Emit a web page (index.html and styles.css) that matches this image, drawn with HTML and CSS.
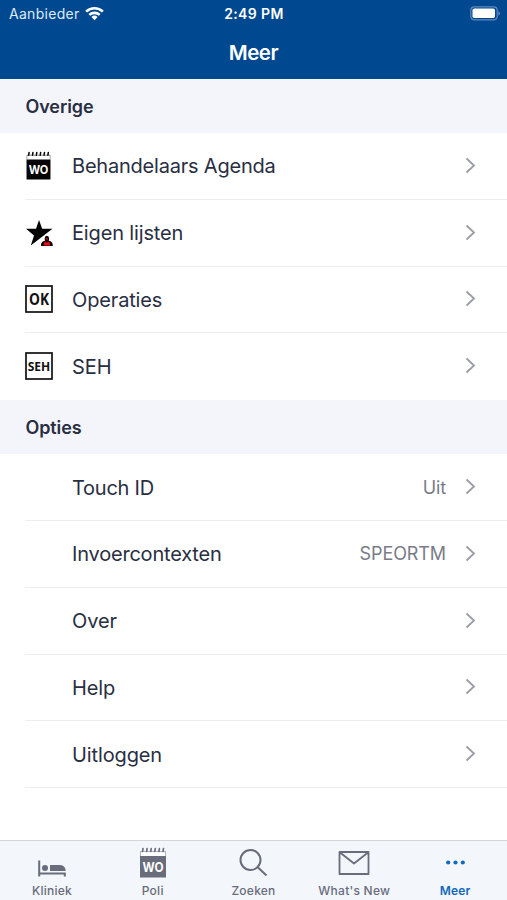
FILE: index.html
```html
<!DOCTYPE html>
<html lang="nl">
<head>
<meta charset="utf-8">
<title>Meer</title>
<link rel="stylesheet" href="styles.css">
</head>
<body>
<svg class="defs" aria-hidden="true">
  <symbol id="chevron" viewBox="0 0 12 18"><path d="M1.500 1.500l7.500 7L1.500 15.500" fill="none" stroke="currentColor" stroke-width="1.800"/></symbol>
  <symbol id="agenda" viewBox="0 0 26 32">
    <path d="M.5 9V4.500h25V9" fill="#fff" stroke="currentColor" stroke-width=".5"/>
    <path d="M0 9h26v21.500H0z" fill="currentColor"/>
    <path d="M3 1.500l-.5 3M7.100 1.500l-.5 3M11.200 1.500l-.5 3M15.300 1.500l-.5 3M19.400 1.500l-.5 3M23.500 1.500l-.5 3" stroke="currentColor" stroke-width="1.600" stroke-linecap="round"/>
    <text x="13" y="24.500" text-anchor="middle" textLength="21" lengthAdjust="spacingAndGlyphs" class="agenda-text">WO</text>
  </symbol>
</svg>
<div class="screen">
  <header class="top">
    <div class="status">
      <div class="carrier"><span>Aanbieder</span>
        <svg class="wifi" viewBox="0 0 20 15"><g fill="none" stroke="#fff" stroke-width="2.700"><path d="M1.200 5.500a12.600 12.600 0 0 1 17.600 0"/><path d="M4.500 9a8 8 0 0 1 11 0"/></g><path d="M6.800 11.200a4.700 4.700 0 0 1 6.400 0L10 14.500z" fill="#fff"/></svg>
      </div>
      <div class="time">2:49 PM</div>
      <svg class="battery" viewBox="0 0 31 15"><rect x=".8" y=".8" width="26.400" height="13" rx="3.500" fill="none" stroke="#6289ba" stroke-width="1.200"/><rect x="2.500" y="2.500" width="22.500" height="9.600" rx="1.800" fill="#fff"/><path d="M28.500 5q2.600 2.400 0 4.800z" fill="#7599c5"/></svg>
    </div>
    <h1>Meer</h1>
  </header>
  <main>
    <h2>Overige</h2>
    <ul>
      <li><div class="icon"><svg class="agenda" viewBox="0 0 26 32"><use href="#agenda"/></svg></div><span class="label l1">Behandelaars Agenda</span><svg class="chev"><use href="#chevron"/></svg></li>
      <li><div class="icon"><svg class="star" viewBox="0 0 28 28"><path d="M14 1l3.200 8.800H27.500L5.800 26.500l3.200-10L1 9.800h10z" fill="#050505"/><path d="M16 27q-.4-4.400 4-5.200-1.200-4.800 1.800-5 3.200.2 2 5 4.300.8 4 5.200z" fill="#160505"/><path d="M18.700 26.500l.5-3 1.700-1 1 1.500 1-1.500 1.700 1 .5 3z" fill="#e40c19"/><circle cx="21.800" cy="20" r="1.100" fill="#8d2024"/></svg></div><span class="label l2">Eigen lijsten</span><svg class="chev"><use href="#chevron"/></svg></li>
      <li><div class="icon"><svg class="box" viewBox="0 0 28 28"><rect x="1" y="1" width="26" height="26" fill="#fff" stroke="#111" stroke-width="1.700"/><text x="14" y="19.500" text-anchor="middle" textLength="20" lengthAdjust="spacingAndGlyphs" class="ok">OK</text></svg></div><span class="label l3">Operaties</span><svg class="chev"><use href="#chevron"/></svg></li>
      <li class="last"><div class="icon"><svg class="box" viewBox="0 0 28 28"><rect x="1" y="1" width="26" height="26" fill="#fff" stroke="#111" stroke-width="1.700"/><text x="14" y="18.500" text-anchor="middle" textLength="22.500" lengthAdjust="spacingAndGlyphs" class="seh">SEH</text></svg></div><span class="label l4">SEH</span><svg class="chev"><use href="#chevron"/></svg></li>
    </ul>
    <h2>Opties</h2>
    <ul>
      <li><div class="icon"></div><span class="label l5">Touch ID</span><span class="value">Uit</span><svg class="chev"><use href="#chevron"/></svg></li>
      <li><div class="icon"></div><span class="label l6">Invoercontexten</span><span class="value">SPEORTM</span><svg class="chev"><use href="#chevron"/></svg></li>
      <li><div class="icon"></div><span class="label l7">Over</span><svg class="chev"><use href="#chevron"/></svg></li>
      <li><div class="icon"></div><span class="label l7">Help</span><svg class="chev"><use href="#chevron"/></svg></li>
      <li><div class="icon"></div><span class="label l7">Uitloggen</span><svg class="chev"><use href="#chevron"/></svg></li>
    </ul>
  </main>
  <nav>
    <a><svg width="28" height="32" viewBox="0 0 28 32"><path d="M1.200 13.500v16M1 26.500h26M26.800 25.500v4" fill="none" stroke="currentColor" stroke-width="2"/><circle cx="7" cy="21" r="3" fill="currentColor"/><path d="M12 18h10q5.500.500 5.700 6H12z" fill="currentColor"/></svg><span>Kliniek</span></a>
    <a><svg width="26" height="32" viewBox="0 0 26 32"><use href="#agenda"/></svg><span>Poli</span></a>
    <a><svg width="30" height="32" viewBox="0 0 30 32"><g fill="none" stroke="currentColor" stroke-width="2"><circle cx="12.500" cy="13" r="10"/><path d="M19.500 20l9 8.500"/></g></svg><span>Zoeken</span></a>
    <a><svg width="32" height="32" viewBox="0 0 32 32"><path d="M1.500 5h29v22h-29zM2 5.500l14 11L30 5.500" fill="none" stroke="currentColor" stroke-width="1.800" stroke-linejoin="round"/></svg><span>What's New</span></a>
    <a class="active"><svg width="20" height="32" viewBox="0 0 20 32"><g fill="currentColor"><circle cx="3.200" cy="15.500" r="2.100"/><circle cx="10.500" cy="15.500" r="2.100"/><circle cx="17.800" cy="15.500" r="2.100"/></g></svg><span>Meer</span></a>
  </nav>
</div>
</body>
</html>
```
FILE: styles.css
```css
* { box-sizing: border-box; }
body { margin: 0; background: #fff; font-family: Inter, "Liberation Sans", sans-serif; color: #292e42; }
.defs { display: none; }
.screen { width: 507px; height: 900px; display: flex; flex-direction: column; overflow: hidden; }
.top { height: 79px; flex: none; background: #00488f; color: #fff; }
.status { height: 27px; display: grid; grid-template-columns: 1fr auto 1fr; align-items: center; padding: 0 6px 0 9px; font-size: 14px; }
.carrier { display: flex; align-items: center; gap: 5px; letter-spacing: .3px; color: #dfebfa; }
.wifi { width: 19px; height: 15px; }
.time { font-weight: 600; font-size: 14px; letter-spacing: .4px; margin-right: 2px; }
.battery { width: 31px; height: 15px; justify-self: end; }
h1 { margin: 0; height: 52px; line-height: 51px; text-align: center; font-size: 20.5px; font-weight: 600; letter-spacing: -.5px; }
h2 { margin: 0; height: 54px; line-height: 55px; padding-left: 25.5px; background: #f3f5fa; font-size: 18px; font-weight: 600; letter-spacing: -.1px; }
ul { list-style: none; margin: 0; padding: 0 0 0 25px; }
li { height: 66.8px; display: flex; align-items: center; padding-right: 30px; border-bottom: 1px solid #ededf0; }
li.last { border-bottom-color: transparent; }
.icon { width: 47px; flex: none; display: flex; align-items: center; }
.icon svg { width: 28px; height: 28px; color: #050505; }
.icon .agenda { width: 25px; height: 30px; margin-left: 1px; }
.label { flex: 1; font-size: 20px; line-height: 28px; padding-top: 1px; white-space: nowrap; }
.l1 { letter-spacing: -.21px; }
.l2, .l3 { letter-spacing: -.15px; }
.l5 { letter-spacing: -.25px; }
.l6 { letter-spacing: -.2px; }
.l7 { letter-spacing: -.12px; }
.value { color: #797b88; font-size: 18px; letter-spacing: -.1px; margin-right: 19px; }
.chev { width: 12px; height: 18px; color: #9b9da5; }
.agenda-text { font: 700 12.500px Inter, sans-serif; fill: #fff; }
.ok { font: 700 16px "Open Sans", sans-serif; fill: #111; }
.seh { font: 700 12px "Open Sans", sans-serif; fill: #111; }
nav { margin-top: auto; height: 60px; flex: none; border-top: 1px solid #d3d4d9; background: #f3f6fb; display: grid; grid-template-columns: repeat(5, 100.8px); justify-content: center; color: #686c7b; }
nav a { display: flex; flex-direction: column; align-items: center; padding-top: 6px; }
nav svg { flex: none; }
nav span { font-size: 12px; line-height: 16px; margin-top: 4px; font-weight: 500; letter-spacing: .25px; white-space: nowrap; }
nav .active { color: #1268bd; }
nav .active span { font-weight: 600; letter-spacing: .1px; }
```
